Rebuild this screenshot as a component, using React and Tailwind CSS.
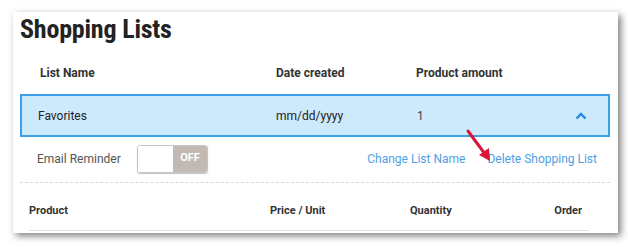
export default function App() {
  const font = { fontFamily: 'Roboto, "Liberation Sans", sans-serif' };
  return (
    <div className="w-[628px] h-[247px] bg-white overflow-hidden" style={font}>
      <div className="ml-[13px] mt-[12px] w-[605px] h-[221px] bg-white shadow-[3px_3px_7px_rgba(0,0,0,0.5)] relative">
        {/* Title */}
        <h1
          className="pl-[7px] pt-[2px] text-[26px] leading-[30px] font-bold text-[#222] tracking-[-0.2px]"
          style={{ fontFamily: '"Roboto Condensed", "Liberation Sans Narrow", "DejaVu Sans Condensed", Roboto, sans-serif', fontStretch: 'condensed' }}
        >
          Shopping Lists
        </h1>

        {/* Column headers */}
        <div className="flex items-center h-[42px] mt-[8px] ml-[7px] mr-[8px] text-[12px] font-bold text-[#333]">
          <div className="w-[256px] pl-[20px]">List Name</div>
          <div className="w-[140px]">Date created</div>
          <div>Product amount</div>
        </div>

        {/* Selected list row */}
        <div className="flex items-center h-[43px] ml-[7px] mr-[8px] bg-[#cde9fc] border-2 border-[#3a9fe8] text-[12px] text-[#222]">
          <div className="w-[254px] pl-[16px]">Favorites</div>
          <div className="w-[141px]">mm/dd/yyyy</div>
          <div className="flex-1 text-[#444]">1</div>
          <svg width="12" height="8" viewBox="0 0 12 8" className="mr-[21px]">
            <path d="M1.5 6.5 L6 2 L10.5 6.5" fill="none" stroke="#1f8ae6" strokeWidth="2.4" />
          </svg>
        </div>

        {/* Options row */}
        <div className="flex items-center h-[46px] ml-[7px] mr-[8px] border-b border-dashed border-[#d8d8d8] text-[12px]">
          <div className="w-[117px] pl-[17px] text-[#555] pb-[2px]">Email Reminder</div>
          <div className="flex w-[71px] h-[28px] mb-[2px] rounded-[3px] border border-[#c9c4bf] overflow-hidden shadow-[0_1px_1px_rgba(0,0,0,0.25)]">
            <div className="w-[35px] bg-white"></div>
            <div className="flex-1 bg-[#c2bab2] flex items-center justify-center text-white font-bold text-[11px]">OFF</div>
          </div>
          <div className="flex-1"></div>
          <div className="text-[#4d9fe3] mr-[22px] pb-[2px]">Change List Name</div>
          <div className="text-[#4d9fe3] mr-[13px] pb-[2px]">Delete Shopping List</div>
        </div>

        {/* Product headers */}
        <div className="flex items-center h-[48px] pt-[9px] ml-[16px] mr-[29px] border-b border-[#e2e2e2] text-[11px] font-bold text-[#333]">
          <div className="w-[241px]">Product</div>
          <div className="w-[140px]">Price / Unit</div>
          <div className="flex-1">Quantity</div>
          <div className="mr-[7px]">Order</div>
        </div>

        {/* annotation arrow */}
        <svg className="absolute left-[452px] top-[116px]" width="30" height="36" viewBox="0 0 30 36">
          <path d="M3 3 L20 26" stroke="#d9163a" strokeWidth="3" strokeLinecap="round" />
          <path d="M14 27 L25 33 L24 20 Z" fill="#d9163a" />
        </svg>
      </div>
    </div>
  );
}
